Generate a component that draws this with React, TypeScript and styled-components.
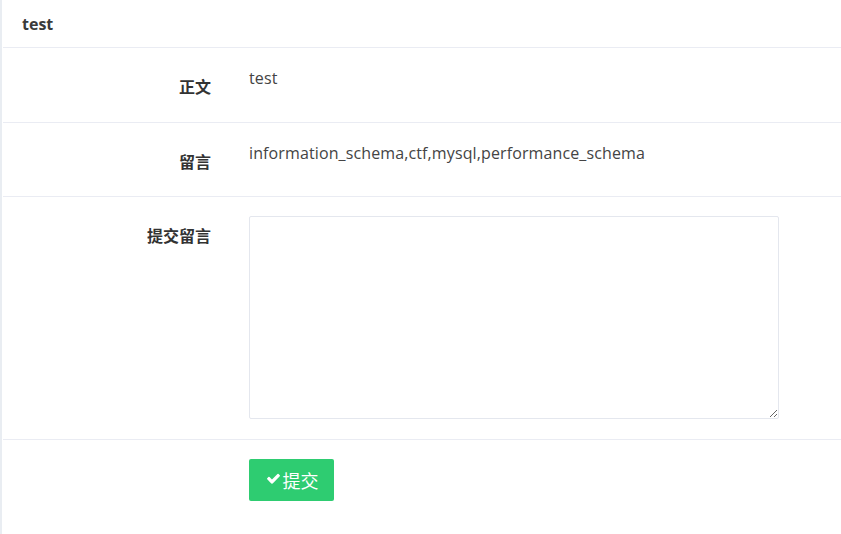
import React, { useState } from 'react';
import styled, { createGlobalStyle } from 'styled-components';

const GlobalStyle = createGlobalStyle`
  html, body {
    margin: 0;
    padding: 0;
    background: #ffffff;
  }
  body {
    font-family: "Open Sans", "Noto Sans CJK SC", sans-serif;
    color: #333333;
  }
`;

const Page = styled.div`
  min-height: 534px;
  border-left: 2px solid #e9edf2;
  box-sizing: border-box;
`;

const Panel = styled.div`
  margin-left: 1px;
  background: #ffffff;
`;

const PanelHeader = styled.div`
  height: 47px;
  display: flex;
  align-items: center;
  padding-left: 19px;
  border-bottom: 1px solid #eaecf3;
  font-size: 16px;
  font-weight: 700;
  color: #3a3a3a;
`;

const FormRow = styled.div<{ $last?: boolean }>`
  display: grid;
  grid-template-columns: 208px 530px;
  column-gap: 38px;
  padding: 20px 0;
  border-bottom: ${p => (p.$last ? 'none' : '1px solid #eaecf3')};
`;

const Label = styled.div`
  text-align: right;
  padding-top: 9px;
  margin-bottom: 4.5px;
  font-size: 16px;
  line-height: 20px;
  font-weight: 700;
  color: #333333;
`;

const Value = styled.div`
  font-size: 16px;
  line-height: 20px;
  letter-spacing: 0.12px;
  color: #444444;
`;

const TextArea = styled.textarea`
  display: block;
  width: 530px;
  height: 203px;
  box-sizing: border-box;
  margin-top: -1px;
  margin-bottom: -0.5px;
  border: 1px solid #e4e7ee;
  border-radius: 2px;
  padding: 6px 10px;
  font-family: "Open Sans", "Noto Sans CJK SC", sans-serif;
  font-size: 14px;
  color: #333333;
  outline: none;
`;

const SubmitButton = styled.button`
  margin-top: -1px;
  width: 85px;
  height: 42px;
  display: flex;
  align-items: center;
  justify-content: center;
  gap: 2px;
  background: #2ecc71;
  border: none;
  border-radius: 2px;
  color: #ffffff;
  font-family: "Noto Sans CJK SC", sans-serif;
  font-size: 18px;
  cursor: pointer;
  padding: 0 0 0 1px;

  svg {
    width: 15px;
    height: 14px;
    fill: #ffffff;
  }
`;

const CheckIcon = () => (
  <svg viewBox="0 0 1792 1600" aria-hidden="true">
    <path d="M1671 394q0 40-28 68l-724 724-136 136q-28 28-68 28t-68-28l-136-136-362-362q-28-28-28-68t28-68l136-136q28-28 68-28t68 28l294 295 656-657q28-28 68-28t68 28l136 136q28 28 28 68z" transform="translate(0 -100)" />
  </svg>
);

const App: React.FC = () => {
  const [comment, setComment] = useState('');

  return (
    <Page>
      <GlobalStyle />
      <Panel>
        <PanelHeader>test</PanelHeader>
        <FormRow>
          <Label>正文</Label>
          <Value>test</Value>
        </FormRow>
        <FormRow>
          <Label>留言</Label>
          <Value>information_schema,ctf,mysql,performance_schema</Value>
        </FormRow>
        <FormRow>
          <Label>提交留言</Label>
          <TextArea value={comment} onChange={e => setComment(e.target.value)} />
        </FormRow>
        <FormRow $last>
          <div />
          <div>
            <SubmitButton type="button">
              <CheckIcon />
              提交
            </SubmitButton>
          </div>
        </FormRow>
      </Panel>
    </Page>
  );
};

export default App;
